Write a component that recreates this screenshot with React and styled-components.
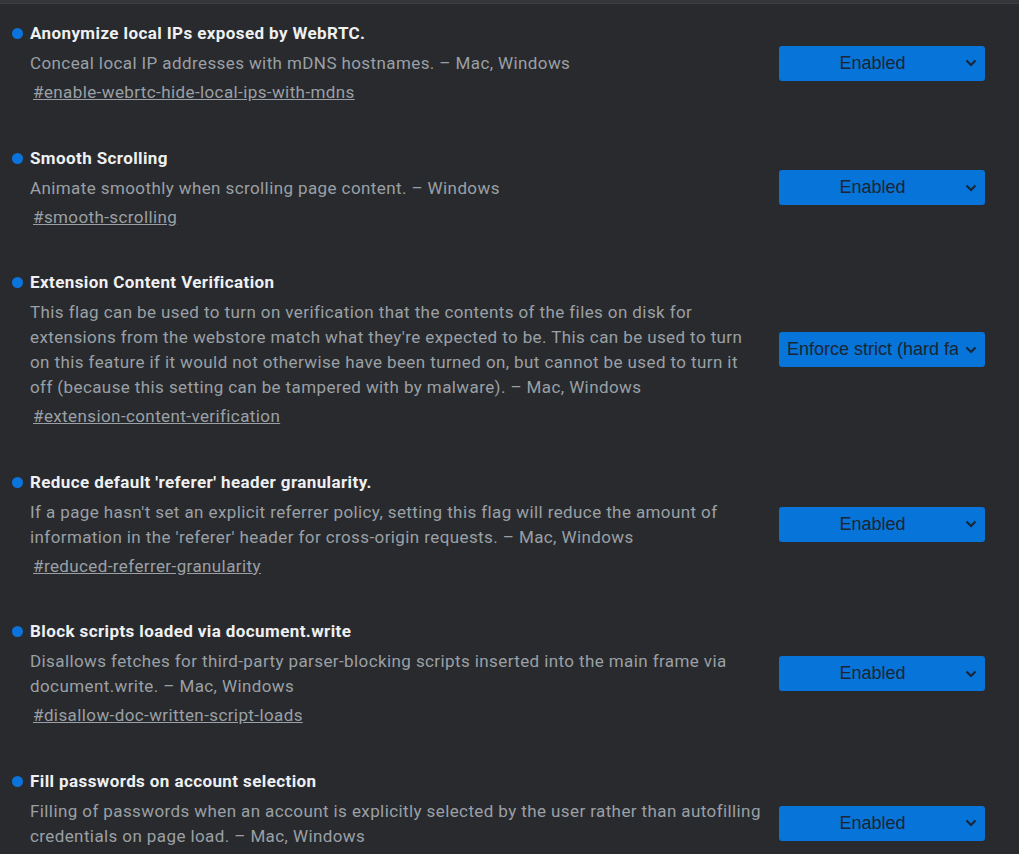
import React from 'react'
import styled, { createGlobalStyle } from 'styled-components'

const GlobalStyle = createGlobalStyle`
  html, body {
    margin: 0;
    padding: 0;
    background: #292a2d;
  }
  body {
    font-family: Roboto, "Liberation Sans", sans-serif;
  }
`

const Page = styled.div`
  min-height: 854px;
  background: #292a2d;
  border-top: 3px solid #35363a;
  box-shadow: inset 0 1px 0 #3c3d41;
  overflow: hidden;
`

const List = styled.div`
  display: flex;
  flex-direction: column;
  gap: 40.5px;
  padding-top: 18px;
`

const Row = styled.div`
  display: flex;
  align-items: center;
  padding-left: 12px;
  padding-right: 34px;
`

const Dot = styled.span`
  flex: none;
  width: 11px;
  height: 11px;
  border-radius: 50%;
  background: #0b74dc;
  margin-top: 7px;
  margin-right: 7px;
  align-self: flex-start;
`

const Body = styled.div`
  width: 732px;
  margin-right: 17px;
  font-size: 17px;
  letter-spacing: 0.4px;
  line-height: 25px;
`

const Title = styled.h3`
  margin: 0 0 5px;
  font-size: 17px;
  line-height: 25px;
  font-weight: 700;
  color: #eef0f2;
`

const Description = styled.p`
  margin: 0 0 4px;
  color: #9aa0a6;
`

const Permalink = styled.a`
  display: inline-block;
  margin-left: 3px;
  color: #9aa0a6;
  text-decoration: underline;
`

const Select = styled.div`
  flex: none;
  display: flex;
  align-items: center;
  width: 206px;
  height: 35px;
  box-sizing: border-box;
  padding: 0 8px 0 8px;
  gap: 7px;
  border-radius: 3px;
  background: #0674d8;
  color: #1b2533;
  font-family: "Liberation Sans", Arial, sans-serif;
  font-size: 18px;
`

const Value = styled.span`
  flex: 1;
  min-width: 0;
  text-align: center;
  white-space: nowrap;
  overflow: hidden;
`

const Chevron = styled.svg`
  flex: none;
`

const flags = [
  {
    title: 'Anonymize local IPs exposed by WebRTC.',
    description: 'Conceal local IP addresses with mDNS hostnames. – Mac, Windows',
    link: 'enable-webrtc-hide-local-ips-with-mdns',
    value: 'Enabled',
  },
  {
    title: 'Smooth Scrolling',
    description: 'Animate smoothly when scrolling page content. – Windows',
    link: 'smooth-scrolling',
    value: 'Enabled',
  },
  {
    title: 'Extension Content Verification',
    description:
      "This flag can be used to turn on verification that the contents of the files on disk for extensions from the webstore match what they're expected to be. This can be used to turn on this feature if it would not otherwise have been turned on, but cannot be used to turn it off (because this setting can be tampered with by malware). – Mac, Windows",
    link: 'extension-content-verification',
    value: 'Enforce strict (hard fail if hashes are missing)',
  },
  {
    title: "Reduce default 'referer' header granularity.",
    description:
      "If a page hasn't set an explicit referrer policy, setting this flag will reduce the amount of information in the 'referer' header for cross-origin requests. – Mac, Windows",
    link: 'reduced-referrer-granularity',
    value: 'Enabled',
  },
  {
    title: 'Block scripts loaded via document.write',
    description:
      'Disallows fetches for third-party parser-blocking scripts inserted into the main frame via document.write. – Mac, Windows',
    link: 'disallow-doc-written-script-loads',
    value: 'Enabled',
  },
  {
    title: 'Fill passwords on account selection',
    description:
      'Filling of passwords when an account is explicitly selected by the user rather than autofilling credentials on page load. – Mac, Windows',
    link: 'fill-on-account-select',
    value: 'Enabled',
  },
]

const App = () => (
  <>
    <GlobalStyle />
    <Page>
      <List>
        {flags.map((flag) => (
          <Row key={flag.link}>
            <Dot />
            <Body>
              <Title>{flag.title}</Title>
              <Description>{flag.description}</Description>
              <Permalink>#{flag.link}</Permalink>
            </Body>
            <Select>
              <Value>{flag.value}</Value>
              <Chevron width="12" height="8" viewBox="0 0 12 8">
                <path d="M1.5 1.5 L6 6 L10.5 1.5" fill="none" stroke="#1b2533" strokeWidth="2" />
              </Chevron>
            </Select>
          </Row>
        ))}
      </List>
    </Page>
  </>
)

export default App
